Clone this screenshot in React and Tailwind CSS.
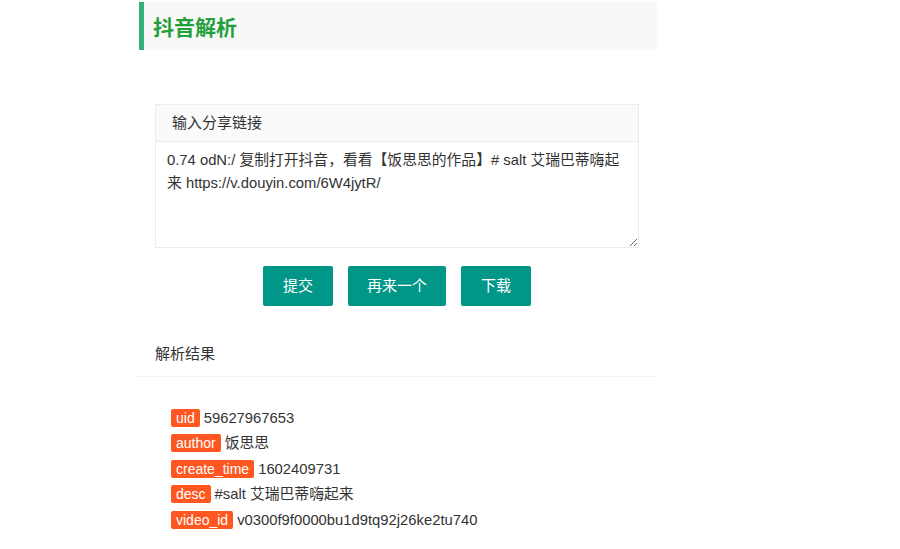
import React from "react";

const rows = [
  ["uid", "59627967653"],
  ["author", "饭思思"],
  ["create_time", "1602409731"],
  ["desc", "#salt 艾瑞巴蒂嗨起来"],
  ["video_id", "v0300f9f0000bu1d9tq92j26ke2tu740"],
];

export default function App() {
  return (
    <div className="w-[900px] h-[549px] bg-white overflow-hidden font-['Liberation_Sans','Noto_Sans_CJK_SC',sans-serif] text-[#333]">
      <div className="ml-[139px] w-[518px] pt-[2px]">
        <div className="h-[48px] border-l-[5px] border-[#31b07a] bg-[#f8f8f8] flex items-center pl-[9px] rounded-r-[2px]">
          <h1 className="text-[21px] leading-[30px] font-bold text-[#24a03a] font-['Noto_Sans_CJK_SC',sans-serif]">抖音解析</h1>
        </div>

        <div className="ml-[16px] w-[484px] mt-[54px]">
          <div className="h-[38px] bg-[#fafafa] border border-[#ececec] pl-[16px] flex items-center text-[15px] text-[#333]">
            输入分享链接
          </div>
          <textarea
            readOnly
            className="block w-full h-[106px] border border-t-0 border-[#ececec] px-[11px] py-[7px] text-[14.8px] leading-[23px] text-[#333] outline-none resize-y bg-white"
            value="0.74 odN:/ 复制打开抖音，看看【饭思思的作品】# salt 艾瑞巴蒂嗨起来 https://v.douyin.com/6W4jytR/"
          />
          <div className="mt-[18px] flex justify-center gap-[15px]">
            <button className="h-[40px] w-[70px] bg-[#009688] text-white text-[15px] rounded-[2px]">提交</button>
            <button className="h-[40px] w-[98px] bg-[#009688] text-white text-[15px] rounded-[2px]">再来一个</button>
            <button className="h-[40px] w-[70px] bg-[#009688] text-white text-[15px] rounded-[2px]">下载</button>
          </div>
        </div>

        <div className="-ml-[3px] w-[522px] mt-[27px]">
          <div className="h-[44px] border-b border-[#f2f2f2] pl-[19px] flex items-center text-[15px] text-[#333]">
            解析结果
          </div>
          <div className="pt-[28px] pl-[35px] flex flex-col">
            {rows.map(([k, v]) => (
              <div key={k} className="h-[25.5px] flex items-center gap-[4px]">
                <span className="h-[18px] px-[5px] bg-[#ff5722] text-white text-[14px] leading-[18px] rounded-[2px]">{k}</span>
                <span className="text-[14.8px] text-[#333]">{v}</span>
              </div>
            ))}
          </div>
        </div>
      </div>
    </div>
  );
}
